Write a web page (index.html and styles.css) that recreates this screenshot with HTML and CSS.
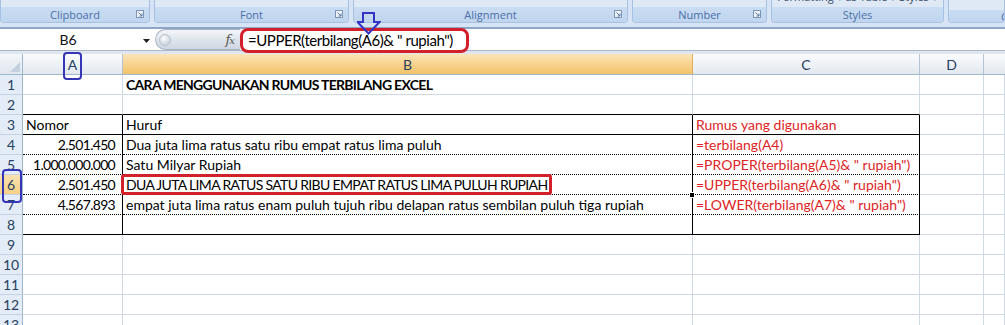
FILE: index.html
```html
<!DOCTYPE html>
<html>
<head>
<meta charset="utf-8">
<link rel="stylesheet" href="styles.css">
</head>
<body>
<div class="app">
  <div class="ribbon">
    <div class="group g1">
      <div class="g-top"><span class="painter"></span></div>
      <div class="g-label"><span>Clipboard</span><svg class="launch" width="8" height="8" viewBox="0 0 8 8"><rect x="0.5" y="0.5" width="7" height="7" fill="#eef3fa" stroke="#7b95b8"/><path d="M2.5 2.5 L6 6 M6 3.5 V6 H3.5" stroke="#5a7aa5" fill="none"/></svg></div>
    </div>
    <div class="group g2">
      <div class="g-top"></div>
      <div class="g-label"><span>Font</span><svg class="launch" width="8" height="8" viewBox="0 0 8 8"><rect x="0.5" y="0.5" width="7" height="7" fill="#eef3fa" stroke="#7b95b8"/><path d="M2.5 2.5 L6 6 M6 3.5 V6 H3.5" stroke="#5a7aa5" fill="none"/></svg></div>
    </div>
    <div class="group g3">
      <div class="g-top"></div>
      <div class="g-label"><span>Alignment</span><svg class="launch" width="8" height="8" viewBox="0 0 8 8"><rect x="0.5" y="0.5" width="7" height="7" fill="#eef3fa" stroke="#7b95b8"/><path d="M2.5 2.5 L6 6 M6 3.5 V6 H3.5" stroke="#5a7aa5" fill="none"/></svg></div>
    </div>
    <div class="group g4">
      <div class="g-top"></div>
      <div class="g-label"><span>Number</span><svg class="launch" width="8" height="8" viewBox="0 0 8 8"><rect x="0.5" y="0.5" width="7" height="7" fill="#eef3fa" stroke="#7b95b8"/><path d="M2.5 2.5 L6 6 M6 3.5 V6 H3.5" stroke="#5a7aa5" fill="none"/></svg></div>
    </div>
    <div class="group g5">
      <div class="g-top"><span class="cut">Formatting ▾ as Table ▾ Styles ▾</span></div>
      <div class="g-label center"><span>Styles</span></div>
    </div>
    <div class="group g6">
      <div class="g-top"></div>
      <div class="g-label"><span class="c-cut">C</span></div>
    </div>
  </div>

  <div class="fbar">
    <div class="namebox">
      <span class="nb-text">B6</span>
      <svg class="nb-arrow" width="7" height="4" viewBox="0 0 7 4"><path d="M0 0 H7 L3.5 4 Z" fill="#222"/></svg>
    </div>
    <div class="pill">
      <span class="knob"></span>
      <span class="fx">f<span class="fx-x">x</span></span>
    </div>
    <div class="formula">=UPPER(terbilang(A6)&amp; " rupiah")</div>
  </div>
  <div class="fgap"></div>

  <div class="sheet">
    <div class="corner"><svg width="10" height="10" viewBox="0 0 10 10"><path d="M10 0 V10 H0 Z" fill="#c6d1df"/></svg></div>
    <div class="ch">A</div>
    <div class="ch sel">B</div>
    <div class="ch">C</div>
    <div class="ch">D</div>
    <div class="ch last"></div>

    <div class="rh">1</div>
    <div class="c"></div>
    <div class="c title">CARA MENGGUNAKAN RUMUS TERBILANG EXCEL</div>
    <div class="c"></div>
    <div class="c"></div>
    <div class="c"></div>

    <div class="rh">2</div>
    <div class="c bb"></div>
    <div class="c bb"></div>
    <div class="c bb"></div>
    <div class="c"></div>
    <div class="c"></div>

    <div class="rh">3</div>
    <div class="c bb br">Nomor</div>
    <div class="c bb br">Huruf</div>
    <div class="c bb br red">Rumus yang digunakan</div>
    <div class="c"></div>
    <div class="c"></div>

    <div class="rh">4</div>
    <div class="c bd br num">2.501.450</div>
    <div class="c bd br">Dua juta lima ratus satu ribu empat ratus lima puluh</div>
    <div class="c bd br red">=terbilang(A4)</div>
    <div class="c"></div>
    <div class="c"></div>

    <div class="rh">5</div>
    <div class="c bd br num">1.000.000.000</div>
    <div class="c bd br">Satu Milyar Rupiah</div>
    <div class="c bd br red">=PROPER(terbilang(A5)&amp; " rupiah")</div>
    <div class="c"></div>
    <div class="c"></div>

    <div class="rh sel">6</div>
    <div class="c bd br num">2.501.450</div>
    <div class="c bd br caps">DUA JUTA LIMA RATUS SATU RIBU EMPAT RATUS LIMA PULUH RUPIAH</div>
    <div class="c bd br red">=UPPER(terbilang(A6)&amp; " rupiah")</div>
    <div class="c"></div>
    <div class="c"></div>

    <div class="rh">7</div>
    <div class="c bd br num">4.567.893</div>
    <div class="c bd br">empat juta lima ratus enam puluh tujuh ribu delapan ratus sembilan puluh tiga rupiah</div>
    <div class="c bd br red">=LOWER(terbilang(A7)&amp; " rupiah")</div>
    <div class="c"></div>
    <div class="c"></div>

    <div class="rh">8</div>
    <div class="c bb br"></div>
    <div class="c bb br"></div>
    <div class="c bb br"></div>
    <div class="c"></div>
    <div class="c"></div>

    <div class="rh">9</div>
    <div class="c"></div><div class="c"></div><div class="c"></div><div class="c"></div><div class="c"></div>
    <div class="rh">10</div>
    <div class="c"></div><div class="c"></div><div class="c"></div><div class="c"></div><div class="c"></div>
    <div class="rh">11</div>
    <div class="c"></div><div class="c"></div><div class="c"></div><div class="c"></div><div class="c"></div>
    <div class="rh">12</div>
    <div class="c"></div><div class="c"></div><div class="c"></div><div class="c"></div><div class="c"></div>
    <div class="rh">13</div>
    <div class="c"></div><div class="c"></div><div class="c"></div><div class="c"></div><div class="c"></div>
  </div>

  <!-- annotations -->
  <div class="mark-formula"></div>
  <svg class="mark-arrow" width="24" height="23" viewBox="0 0 24 23"><path d="M6 1 H17 V10 H22.5 L11.5 21.5 L0.5 10 H6 Z" fill="none" stroke="#3434c4" stroke-width="2" stroke-linejoin="miter"/></svg>
  <div class="mark-colA"></div>
  <div class="mark-row6"></div>
  <div class="mark-b6"></div>
  <div class="fill-handle"></div>
</div>
</body>
</html>
```

FILE: styles.css
```css
* { box-sizing: border-box; }
html, body { margin: 0; padding: 0; background: #fff; }
body { width: 1005px; height: 325px; overflow: hidden; }
.app { position: relative; width: 1005px; height: 325px; overflow: hidden; font-family: Lato, "Open Sans", sans-serif; }

/* ribbon */
.ribbon {
  display: flex; gap: 4px; height: 29px;
  background: #d6e4f5;
  padding-bottom: 4px;
  border-bottom: 2px solid #8ea6c6;
}
.group {
  display: flex; flex-direction: column;
  border: 1px solid #a9c1e0; border-top: none;
  border-radius: 0 0 4px 4px;
  background: #dce8f6;
  overflow: hidden;
}
.g1 { width: 150px; }
.g2 { width: 195px; }
.g3 { width: 275px; }
.g4 { width: 135px; }
.g5 { width: 173px; }
.g6 { flex: 1; }
.g-top {
  height: 10px; display: flex; flex-direction: column; justify-content: flex-end; align-items: center;
  overflow: hidden; background: #dfe9f6;
}
.cut { font-family: "Open Sans", sans-serif; font-size: 11px; line-height: 14px; color: #3a4d66; white-space: nowrap; margin-bottom: 3px; }
.painter { width: 5px; height: 4px; background: #b08a3a; border-radius: 0 0 2px 2px; margin-bottom: 7px; margin-right: 40px; }
.g-label {
  flex: 1; display: flex; align-items: center; justify-content: center; position: relative;
  background: linear-gradient(#c9dcf2, #c0d5ef);
  font-family: "Open Sans", sans-serif; font-size: 11px; color: #4b6fa6;
}
.launch { position: absolute; right: 5px; top: 3px; }
.c-cut { position: absolute; right: -4px; color: #4b6fa6; }

/* formula bar */
.fbar { display: flex; height: 22px; background: #fff; border-bottom: 1px solid #a9b7c9; }
.namebox { width: 155px; display: flex; align-items: center; position: relative; }
.nb-text { width: 136px; text-align: center; font-family: Lato, sans-serif; font-size: 14px; color: #111; }
.nb-arrow { position: absolute; left: 143px; top: 10px; }
.pill {
  width: 85px; height: 21px; margin-top: 0; display: flex; align-items: center; justify-content: space-between;
  border: 1px solid #a7b4c6; border-right: none; border-radius: 11px 0 0 11px;
  background: linear-gradient(#f4f6f9, #dde3eb 55%, #cfd7e2);
  padding: 0 6px 0 3px;
}
.knob { width: 12px; height: 12px; border-radius: 50%; background: radial-gradient(circle at 40% 35%, #fff, #cdd5df 70%, #b5c0cd); border: 1px solid #b9c3cf; }
.fx { font-family: "DejaVu Serif", serif; font-style: italic; font-size: 13px; color: #555; letter-spacing: -1px; }
.fx-x { font-size: 10px; }
.formula { flex: 1; padding-left: 8px; font-family: Lato, sans-serif; font-size: 15px; line-height: 22px; color: #000; letter-spacing: -0.45px; }
.fgap { height: 3px; background: #dfe6ef; }

/* sheet */
.sheet {
  display: grid;
  grid-template-columns: 23px 100px 570px 227px 64px 1fr;
  grid-template-rows: 21px repeat(13, 20px);
}
.corner {
  background: linear-gradient(#f3f6fa, #e1e7ef);
  border-right: 1px solid #9eb6ce; border-bottom: 1px solid #9eb6ce;
  display: flex; align-items: flex-end; justify-content: flex-end; padding: 0 2px 2px 0;
}
.ch {
  background: linear-gradient(#fafbfd, #eef2f7 50%, #e3e8ef);
  border-right: 1px solid #b6c3d3; border-bottom: 1px solid #9eb6ce;
  display: flex; align-items: center; justify-content: center;
  font-family: Lato, sans-serif; font-size: 14px; color: #26405f;
}
.ch.sel { background: linear-gradient(#fbe5b8, #f8d390 50%, #f2c368); border-right-color: #e0b060; }
.ch.last { border-right: none; }
.rh {
  background: #e4ecf7;
  border-right: 1px solid #9eb6ce; border-bottom: 1px solid #c5d2e3;
  display: flex; align-items: center; justify-content: center;
  font-family: Lato, sans-serif; font-size: 14px; color: #26405f;
}
.rh.sel { background: linear-gradient(#fbe2b0, #f7cf86); }
.c {
  border-right: 1px solid #d0d7e5; border-bottom: 1px solid #d0d7e5;
  padding: 0 3px; display: flex; align-items: center;
  font-family: Lato, sans-serif; font-size: 14px; color: #000; white-space: nowrap; overflow: visible;
}
.c.title { font-weight: bold; letter-spacing: -0.7px; }
.c.caps { letter-spacing: -0.66px; }
.c.bb { border-bottom: 1px solid #000; }
.c.bd { border-bottom: 1px dotted #000; }
.c.br { border-right: 1px solid #000; }
.c.num { justify-content: flex-end; padding-right: 7px; letter-spacing: -0.7px; }
.c.red { color: #dd2424; }

/* annotations */
.mark-formula {
  position: absolute; left: 240px; top: 28px; width: 229px; height: 25px;
  border: 3px solid #d3212c; border-radius: 8px;
}
.mark-arrow { position: absolute; left: 357px; top: 12px; }
.mark-colA {
  position: absolute; left: 63px; top: 52px; width: 19px; height: 28px;
  border: 2px solid #3535b8; border-radius: 4px;
}
.mark-row6 {
  position: absolute; left: 2px; top: 169px; width: 20px; height: 34px;
  border: 2px solid #3535b8; border-radius: 4px;
}
.mark-b6 {
  position: absolute; left: 121px; top: 174px; width: 431px; height: 21px;
  border: 3px solid #d3212c; border-radius: 3px;
}
.fill-handle {
  position: absolute; left: 689px; top: 192px; width: 6px; height: 6px;
  background: #000; border: 1px solid #fff;
}
```
